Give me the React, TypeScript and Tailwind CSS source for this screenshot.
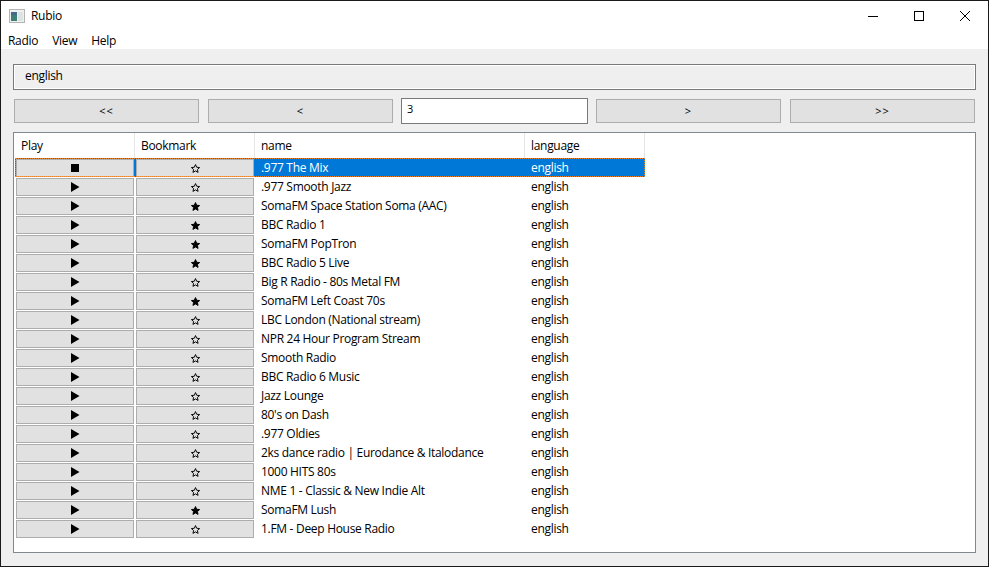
const rows: [string, boolean][] = [
  ['.977 The Mix', false],
  ['.977 Smooth Jazz', false],
  ['SomaFM Space Station Soma (AAC)', true],
  ['BBC Radio 1', true],
  ['SomaFM PopTron', true],
  ['BBC Radio 5 Live', true],
  ['Big R Radio - 80s Metal FM', false],
  ['SomaFM Left Coast 70s', true],
  ['LBC London (National stream)', false],
  ['NPR 24 Hour Program Stream', false],
  ['Smooth Radio', false],
  ['BBC Radio 6 Music', false],
  ['Jazz Lounge', false],
  ["80's on Dash", false],
  ['.977 Oldies', false],
  ['2ks dance radio | Eurodance & Italodance', false],
  ['1000 HITS 80s', false],
  ['NME 1 - Classic & New Indie Alt', false],
  ['SomaFM Lush', true],
  ['1.FM - Deep House Radio', false],
]

function PlayIcon({ playing }: { playing: boolean }) {
  return (
    <svg width="10" height="10" viewBox="0 0 10 10">
      {playing ? <rect x="1" y="1" width="8" height="8" fill="#000" /> : <path d="M1 0L9.5 5L1 10Z" fill="#000" />}
    </svg>
  )
}

function StarIcon({ filled }: { filled: boolean }) {
  return (
    <svg width="9" height="9" viewBox="0 0 24 24">
      <path
        d="M12 1.5l3.2 7.2 7.8.8-5.9 5.2 1.7 7.7L12 18.4l-6.8 4 1.7-7.7L1 9.5l7.8-.8z"
        fill={filled ? '#000' : 'none'}
        stroke="#000"
        strokeWidth="2.6"
      />
    </svg>
  )
}

function NavButton({ label }: { label: string }) {
  return (
    <button className="flex h-6 w-[185px] items-center justify-center border border-[#adadad] bg-[#e1e1e1] text-[11px] tracking-[1px] text-black">
      {label}
    </button>
  )
}

function Row({ name, bookmarked, index }: { name: string; bookmarked: boolean; index: number }) {
  const selected = index === 0
  return (
    <div
      className={
        selected
          ? 'ml-px flex h-[19px] w-[630px] bg-[#0078d7] text-white outline-1 outline-offset-[-1px] outline-[#e8842c] outline-dotted'
          : 'ml-px flex h-[19px] w-[630px] text-black'
      }
    >
      <div className="flex w-[240px] gap-[2px] pl-px">
        <div className="mt-px flex h-[18px] w-[118px] items-center justify-center border border-[#adadad] bg-[#e1e1e1]">
          <PlayIcon playing={selected} />
        </div>
        <div className="mt-px flex h-[18px] w-[118px] items-center justify-center border border-[#adadad] bg-[#e1e1e1]">
          <StarIcon filled={bookmarked} />
        </div>
      </div>
      <div className="flex h-[19px] w-[270px] items-center pl-[6px] pt-px">{name}</div>
      <div className="flex h-[19px] w-[120px] items-center pl-[6px] pt-px">english</div>
    </div>
  )
}

export default function App() {
  return (
    <div className="flex h-[567px] w-[989px] flex-col overflow-hidden border border-[#1a1a1a] bg-[#efefef] font-['Open_Sans','Noto_Sans',sans-serif] text-[12px] tracking-[-0.3px] text-black">
      {/* title bar */}
      <div className="flex h-[29px] items-center bg-white pl-[8px]">
        <svg width="16" height="16" viewBox="0 0 16 16">
          <rect x="0.5" y="1.5" width="15" height="13" fill="#f0f0f0" stroke="#b4b4b4" />
          <rect x="2" y="4" width="6" height="9" fill="#3f7d78" />
          <rect x="2" y="4" width="6" height="3" fill="#45688c" />
          <rect x="9" y="4" width="5" height="9" fill="#dbe4e0" />
        </svg>
        <span className="ml-[6px]">Rubio</span>
        <div className="ml-auto flex">
          <div className="flex h-[29px] w-[46px] items-center justify-center">
            <svg width="10" height="10" viewBox="0 0 10 10"><path d="M0 5.5H10" stroke="#000" /></svg>
          </div>
          <div className="flex h-[29px] w-[46px] items-center justify-center">
            <svg width="10" height="10" viewBox="0 0 10 10"><rect x="0.5" y="0.5" width="9" height="9" fill="none" stroke="#000" /></svg>
          </div>
          <div className="flex h-[29px] w-[46px] items-center justify-center">
            <svg width="10" height="10" viewBox="0 0 10 10"><path d="M0 0L10 10M10 0L0 10" stroke="#000" /></svg>
          </div>
        </div>
      </div>

      {/* menu bar */}
      <div className="flex h-[19px] items-center gap-[14px] bg-white pl-[7px] pt-[2px]">
        <span>Radio</span>
        <span>View</span>
        <span>Help</span>
      </div>

      <div className="flex flex-1 flex-col px-[12px] pt-[15px]">
        <div className="flex h-[26px] w-[963px] items-center border border-[#7a7a7a] pb-[3px] pl-[11px] shadow-[inset_0_0_0_1px_#ffffff]">
          english
        </div>

        <div className="mt-[8px] flex h-[26px] items-center gap-[9px] pl-px">
          <NavButton label="<<" />
          <NavButton label="<" />
          <div className="-mx-px flex h-[26px] w-[187px] items-center border border-[#7a7a7a] bg-white pb-[4px] pl-[5px] text-[11px]">3</div>
          <NavButton label=">" />
          <NavButton label=">>" />
        </div>

        <div className="mt-[8px] h-[421px] w-[963px] border border-[#828790] bg-white">
          <div className="flex h-[25px] text-black">
            <div className="flex w-[121px] items-center border-r border-[#e5e5e5] pl-[7px]">Play</div>
            <div className="flex w-[120px] items-center border-r border-[#e5e5e5] pl-[6px]">Bookmark</div>
            <div className="flex w-[270px] items-center border-r border-[#e5e5e5] pl-[6px]">name</div>
            <div className="flex w-[120px] items-center border-r border-[#e5e5e5] pl-[6px]">language</div>
          </div>
          {rows.map(([name, bookmarked], i) => (
            <Row key={name} name={name} bookmarked={bookmarked} index={i} />
          ))}
        </div>
      </div>
    </div>
  )
}
